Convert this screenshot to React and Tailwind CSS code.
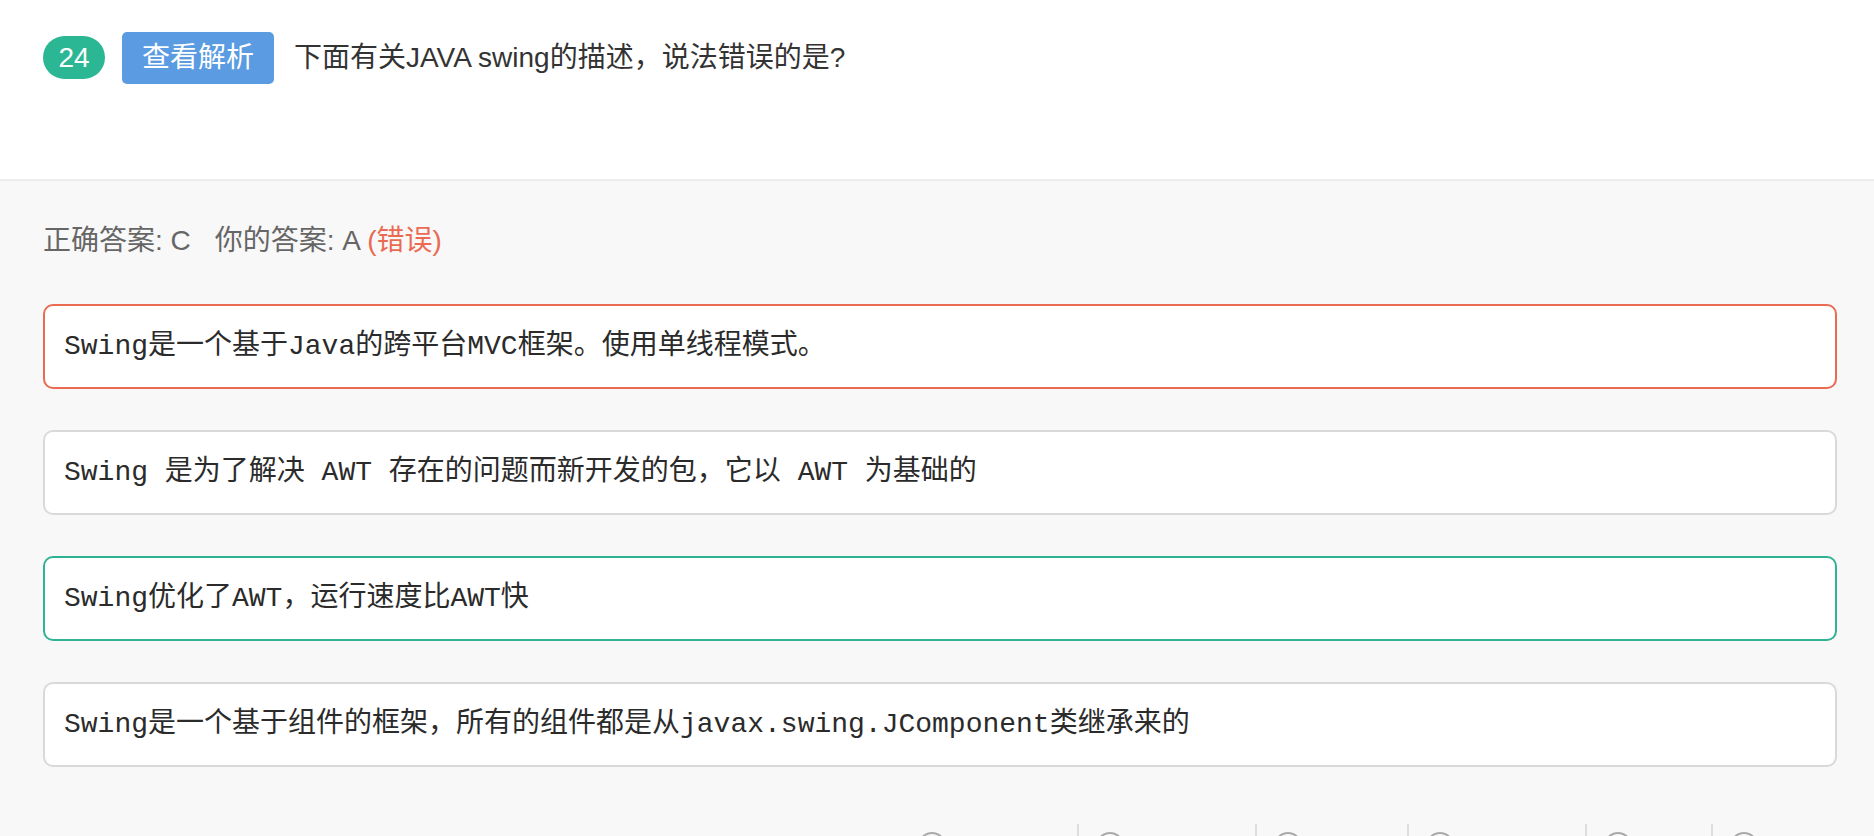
const options = [
  { id: 'A', text: 'Swing是一个基于Java的跨平台MVC框架。使用单线程模式。', status: 'wrong' },
  { id: 'B', text: 'Swing 是为了解决 AWT 存在的问题而新开发的包，它以 AWT 为基础的', status: 'normal' },
  { id: 'C', text: 'Swing优化了AWT，运行速度比AWT快', status: 'right' },
  { id: 'D', text: 'Swing是一个基于组件的框架，所有的组件都是从javax.swing.JComponent类继承来的', status: 'normal' },
]

const actions = ['收藏本题', '标记一下', '写题解', '提交结果', '纠错', '分享']

const borderByStatus = {
  wrong: 'border-[#ea6a52]',
  right: 'border-[#30b394]',
  normal: 'border-[#d9d9d9]',
}

export default function App() {
  return (
    <div className="min-h-screen bg-[#f8f8f8] font-['Liberation_Sans','Noto_Sans_CJK_SC',sans-serif]">
      <header className="flex h-[181px] items-start border-b-2 border-[#ececec] bg-white pl-[43px] pt-[32px]">
        <span className="mt-[4px] flex h-[43px] w-[62px] items-center justify-center rounded-full bg-[#2cb794] text-[28px] leading-none font-medium text-white">
          24
        </span>
        <button className="ml-[17px] h-[52px] w-[152px] rounded-[5px] bg-[#5b9be1] text-[28px] leading-none text-white">
          查看解析
        </button>
        <h1 className="ml-[20px] mt-[9px] text-[28px] leading-[34px] text-[#333]">
          下面有关JAVA swing的描述，说法错误的是?
        </h1>
      </header>

      <div className="pl-[43px] pr-[37px] pt-[40px]">
        <p className="text-[28px] leading-[40px] text-[#666]">
          正确答案: C<span className="ml-[24px]">你的答案: A</span>{' '}
          <span className="text-[#ea6a52]">(错误)</span>
        </p>

        <div className="mt-[43px] flex flex-col gap-[41px]">
          {options.map((opt) => (
            <div
              key={opt.id}
              className={`flex h-[85px] items-center rounded-[10px] border-2 bg-white px-[19px] ${borderByStatus[opt.status]}`}
            >
              <span className="font-['Liberation_Mono','Noto_Sans_CJK_SC',monospace] text-[28px] leading-none whitespace-pre text-[#2b2b2b]">
                {opt.text}
              </span>
            </div>
          ))}
        </div>

        <div className="mt-[57px] flex justify-end">
          {actions.map((label, i) => (
            <div
              key={label}
              className={`flex h-[40px] items-start gap-[10px] px-[17px] pt-[6px] text-[26px] leading-[36px] text-[#999] ${i > 0 ? 'border-l-2 border-[#ddd]' : ''}`}
            >
              <span className="mt-[2px] h-[28px] w-[28px] shrink-0 rounded-full border-2 border-[#aaa]" />
              <span className="mt-[8px]">{label}</span>
            </div>
          ))}
        </div>
      </div>
    </div>
  )
}
